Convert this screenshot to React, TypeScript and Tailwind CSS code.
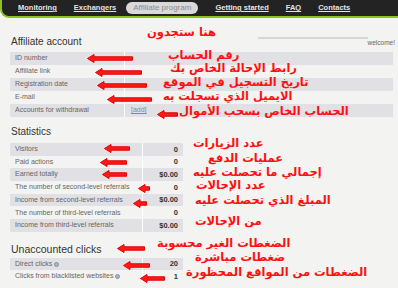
import React from "react";

const NAV = ["Monitoring", "Exchangers"];
const NAV_RIGHT = ["Getting started", "FAQ", "Contacts"];

type Row = { label: string; value?: string; help?: boolean; add?: boolean };

const ACCOUNT: Row[] = [
  { label: "ID number" },
  { label: "Affiliate link" },
  { label: "Registration date" },
  { label: "E-mail" },
  { label: "Accounts for withdrawal", add: true },
];

const STATS: Row[] = [
  { label: "Visitors", value: "0" },
  { label: "Paid actions", value: "0" },
  { label: "Earned totally", value: "$0.00" },
  { label: "The number of second-level referrals", value: "0" },
  { label: "Income from second-level referrals", value: "$0.00" },
  { label: "The number of third-level referrals", value: "0" },
  { label: "Income from third-level referrals", value: "$0.00" },
];

const CLICKS: Row[] = [
  { label: "Direct clicks", value: "20", help: true },
  { label: "Clicks from blacklisted websites", value: "1", help: true },
];

// annotation overlays: [text, left, top]
const NOTES: [string, number, number][] = [
  ["هنا ستجدون", 147, 26],
  ["رقم الحساب", 168, 49],
  ["رابط الإحالة الخاص بك", 170, 62],
  ["تاريخ التسجيل في الموقع", 163, 76],
  ["الايميل الذي تسجلت به", 163, 90],
  ["الحساب الخاص بسحب الأموال", 179, 105],
  ["عدد الزيارات", 193, 137],
  ["عمليات الدفع", 208, 152],
  ["إجمالي ما تحصلت عليه", 193, 166],
  ["عدد الإحالات", 196, 179],
  ["المبلغ الذي تحصلت عليه", 195, 194],
  ["من الإحالات", 195, 215],
  ["الضغطات الغير محسوبة", 157, 237],
  ["ضغطات مباشرة", 195, 251],
  ["الضغطات من المواقع المحظورة", 186, 266],
];

// arrows: [left, right, centerY]
const ARROWS: [number, number, number][] = [
  [87, 133, 58],
  [95, 142, 72],
  [97, 147, 85],
  [107, 152, 99],
  [157, 178, 114],
  [104, 130, 148],
  [100, 127, 162],
  [102, 127, 174],
  [138, 150, 188],
  [133, 147, 203],
  [117, 145, 248],
  [123, 150, 265],
  [140, 165, 278],
];

function Arrow({ x1, x2, y }: { x1: number; x2: number; y: number }) {
  const w = x2 - x1;
  const pts = `0.5,4.5 7,0.5 7,2.8 ${w - 0.5},2.8 ${w - 0.5},6.2 7,6.2 7,8.5`;
  return (
    <svg
      className="absolute"
      style={{ left: x1, top: y - 4.5 }}
      width={w}
      height={9}
      viewBox={`0 0 ${w} 9`}
    >
      <polygon points={pts} fill="#ff1a1a" stroke="#e00000" strokeWidth="1" strokeLinejoin="round" />
    </svg>
  );
}

function Help() {
  return (
    <span className="inline-block w-[5px] h-[5px] ml-[2px] rounded-full bg-[#a9b4c2] border border-[#8493a6] align-middle" />
  );
}

function Table({ rows, wide, h }: { rows: Row[]; wide?: boolean; h: string }) {
  return (
    <div className={wide ? "w-[383px]" : "w-[173px]"}>
      {rows.map((r, i) => (
        <div
          key={r.label}
          className={`flex ${h} ${i % 2 === 0 ? "bg-[#e1e0e5]" : "bg-[#f3f3f1]"}`}
        >
          <div
            className={`${wide ? "w-[115px]" : "w-[133px]"} shrink-0 pl-[5px] border-r border-white text-[7px] text-[#666] flex items-center whitespace-nowrap`}
          >
            {r.label}
            {r.help && <Help />}
          </div>
          {wide ? (
            <div className="flex-1 pl-[6px] flex items-center text-[7px]">
              {r.add && <span className="text-[#7a8aa8] underline">[add]</span>}
            </div>
          ) : (
            <div className="flex-1 pr-[5px] flex items-center justify-end text-[7.5px] font-bold text-[#333]">
              {r.value}
            </div>
          )}
        </div>
      ))}
    </div>
  );
}

export default function App() {
  return (
    <div
      className="relative w-[398px] h-[288px] overflow-hidden bg-[#f3f3f1]"
      style={{ fontFamily: '"Liberation Sans", Arial, sans-serif' }}
    >
      <nav className="h-[18px] bg-[#232323] border-b-2 border-l-2 border-[#8dc21f] rounded-bl-[9px] flex items-start pl-[16px] gap-[17px] text-[7.5px] font-bold text-[#e4e4e4]">
        {NAV.map((n) => (
          <span key={n} className="underline leading-[15px]">
            {n}
          </span>
        ))}
        <span className="-ml-[7px] mt-[2px] h-[12px] px-[7px] rounded-full bg-[#d9d9d9] text-[8px] font-normal text-[#8a8a8a] leading-[12px]">
          Affiliate program
        </span>
        {NAV_RIGHT.map((n) => (
          <span key={n} className="underline leading-[15px]">
            {n}
          </span>
        ))}
      </nav>

      <div className="pl-[10px] pr-[3px]">
        <div className="mt-[18px] flex items-start justify-between">
          <h2 className="pl-[1px] text-[10px] leading-[12px] text-[#333]">Affiliate account</h2>
          <div className="flex items-start">
            <div className="mt-[1px] w-[110px] h-[2px] bg-[#d6d6d8]" />
            <span className="mt-[3px] text-[6.5px] leading-[8px] text-[#666]">welcome!</span>
          </div>
        </div>
        <div className="mt-[4px]">
          <Table rows={ACCOUNT} wide h="h-[13px]" />
        </div>

        <h2 className="mt-[9px] pl-[1px] text-[10px] leading-[12px] text-[#333]">Statistics</h2>
        <div className="mt-[5px]">
          <Table rows={STATS} h="h-[12.7px]" />
        </div>

        <h2 className="mt-[11px] pl-[1px] text-[10.5px] leading-[12px] text-[#333]">Unaccounted clicks</h2>
        <div className="mt-[3px]">
          <Table rows={CLICKS} h="h-[12.5px]" />
        </div>
      </div>

      {ARROWS.map(([a, b, y]) => (
        <Arrow key={`${a}-${y}`} x1={a} x2={b} y={y} />
      ))}

      {NOTES.map(([t, x, y]) => (
        <span
          key={t}
          dir="rtl"
          className="absolute whitespace-nowrap text-[11.5px] leading-[13px] font-bold text-[#ff1010]"
          style={{ left: x, top: y, fontFamily: '"DejaVu Sans", sans-serif' }}
        >
          {t}
        </span>
      ))}
    </div>
  );
}
